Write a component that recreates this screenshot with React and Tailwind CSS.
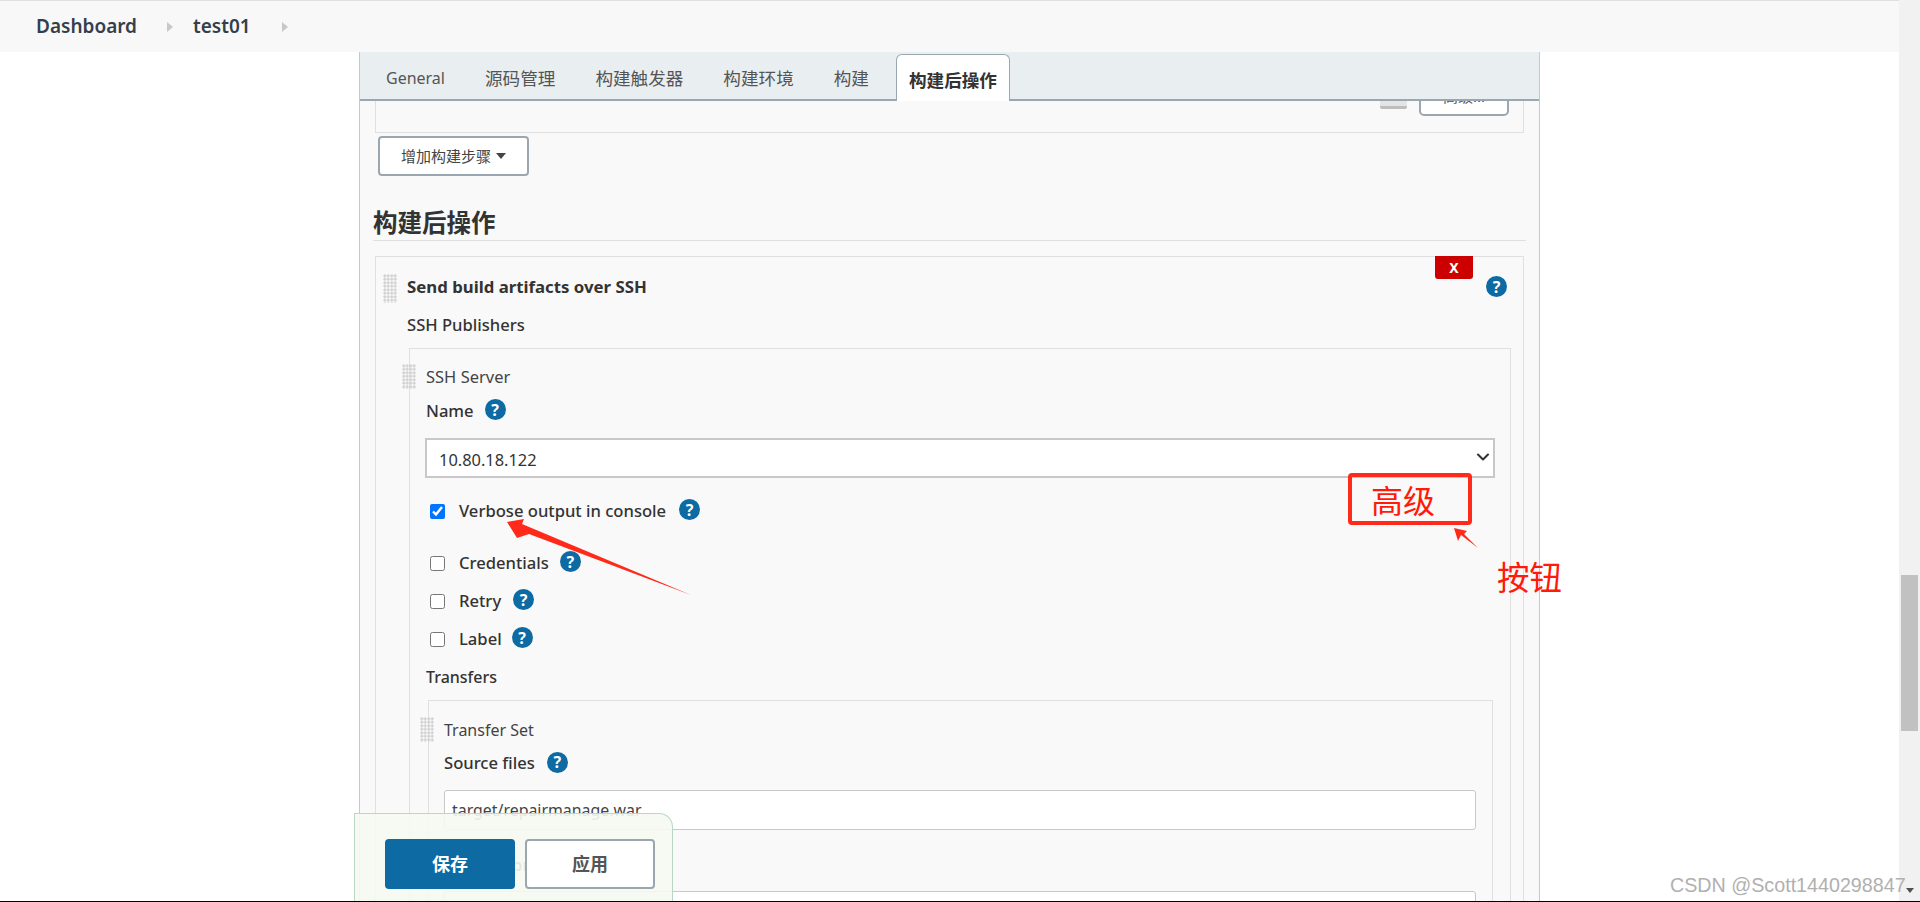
import { ChevronDown } from 'lucide-react';

const Help = ({ className = '' }) => (
  <span className={`flex h-[21px] w-[21px] shrink-0 items-center justify-center rounded-full bg-[#0d6aa3] text-[16px] font-bold leading-none text-white ${className}`}>?</span>
);

const Grip = ({ className = '' }) => (
  <span className={`block w-[14px] shrink-0 bg-[radial-gradient(#cfcfcf_1.2px,transparent_1.6px)] bg-[length:3.5px_3.5px] ${className}`} />
);

const CheckRow = ({ label, checked, className, gap }) => (
  <div className={`ml-[20px] flex h-[24px] items-center ${className}`}>
    <input type="checkbox" defaultChecked={checked} className="m-0 h-[15px] w-[15px] shrink-0" />
    <span className="ml-[14px] text-[16.6px] font-medium leading-[24px] text-[#333]">{label}</span>
    <Help className={`-mt-[3px] ${gap}`} />
  </div>
);

const tabs = ['General', '源码管理', '构建触发器', '构建环境', '构建'];

const Tabs = () => (
  <div className="flex h-[49px] items-end border-b-2 border-[#9aa7b0] bg-[#e9eef1] pl-[6px]">
    {tabs.map((t, i) => (
      <span key={t} className={`mx-[7px] flex h-[46px] items-center px-[13px] pt-[4px] text-[#555] ${i === 0 ? 'text-[16px]' : 'text-[17.6px]'}`}>{t}</span>
    ))}
    <span className="-mb-[2px] mx-[7px] flex h-[47px] items-center rounded-t-[6px] border border-b-0 border-[#9aa7b0] bg-white px-[12px] pt-[4px] text-[17.6px] font-bold text-[#333]">构建后操作</span>
  </div>
);

export default function App() {
  return (
    <div className="relative flex h-[902px] w-[1920px] overflow-hidden border-b border-black bg-white font-['Noto_Sans','Noto_Sans_CJK_SC',sans-serif] text-[#333]">
      <div className="w-[1899px] shrink-0">
        <header className="flex h-[52px] items-center border-t border-[#e0e0e0] bg-[#f8f8f8] pl-[36px] text-[19px] font-semibold text-[#333f4d]">
          <span>Dashboard</span>
          <span className="ml-[30px] h-0 w-0 border-y-[5px] border-l-[6px] border-y-transparent border-l-[#c8c8c8]" />
          <span className="ml-[20px]">test01</span>
          <span className="ml-[31px] h-0 w-0 border-y-[5px] border-l-[6px] border-y-transparent border-l-[#c8c8c8]" />
        </header>

        <main className="ml-[359px] h-[849px] w-[1181px] overflow-hidden border-x border-[#c8c8c8] bg-[#f9f9f9]">
          <Tabs />

          <div className="mx-[15px] flex h-[32px] items-start justify-end overflow-hidden border-x border-b border-[#e0e0e0] pr-[14px]">
            <div className="-mt-[22px] h-[30px] w-[27px] rounded-b-[2px] border-b-[3px] border-[#bdbdbd] bg-[#e4e4e4]" />
            <button className="ml-[12px] -mt-[25px] h-[40px] w-[90px] rounded-[5px] border-2 border-[#9aa7b0] bg-white text-[15px] text-[#555]">高级...</button>
          </div>

          <button className="ml-[18px] mt-[3px] flex h-[40px] w-[151px] items-center justify-center gap-[5px] rounded-[4px] border-2 border-[#9aa7b0] bg-white text-[15px] text-[#444]">
            增加构建步骤
            <span className="h-0 w-0 border-x-[5px] border-t-[6px] border-x-transparent border-t-[#444]" />
          </button>

          <h2 className="mx-[13px] mt-[30px] flex h-[35px] items-center border-b border-[#e0e0e0] text-[24.5px] font-bold text-[#333]">构建后操作</h2>

          <section className="relative mx-[15px] mt-[15px] border-x border-t border-[#e0e0e0]">
            <span className="absolute -top-px right-[50px] flex h-[23px] w-[38px] items-center justify-center rounded-b-[3px] bg-[#cc0000] text-[14px] font-bold text-white">X</span>

            <div className="mt-[17px] flex h-[29px] items-center pr-[16px] pl-[7px]">
              <Grip className="h-[29px]" />
              <span className="ml-[10px] -mt-[4px] text-[16.8px] font-bold">Send build artifacts over SSH</span>
              <Help className="ml-auto -mt-[4px]" />
            </div>

            <div className="ml-[31px] mt-[10px] h-[24px] text-[16.6px] font-medium leading-[24px]">SSH Publishers</div>

            <div className="ml-[33px] mr-[12px] mt-[11px] border-x border-t border-[#e0e0e0]">
              <div className="mt-[15px] flex h-[25px] items-center">
                <Grip className="-ml-[8px] h-[25px]" />
                <span className="ml-[10px] mt-px text-[16.5px] text-[#444]">SSH Server</span>
              </div>

              <div className="ml-[16px] mt-[10px] flex h-[24px] items-center">
                <span className="text-[16.6px] font-medium">Name</span>
                <Help className="ml-[11px] -mt-[3px]" />
              </div>

              <div className="relative ml-[15px] mt-[15px] h-[40px] w-[1070px]">
                <select className="block h-[40px] w-full appearance-none border-2 border-[#c8c8c8] bg-white pl-[12px] pt-[4px] text-[16.4px] text-[#333]">
                  <option>10.80.18.122</option>
                </select>
                <ChevronDown size={20} strokeWidth={2.5} className="pointer-events-none absolute right-[2px] top-[9px] text-[#333]" />
              </div>

              <CheckRow label="Verbose output in console" checked className="mt-[21px]" gap="ml-[13px]" />
              <CheckRow label="Credentials" className="mt-[28px]" gap="ml-[11px]" />
              <CheckRow label="Retry" className="mt-[14px]" gap="ml-[12px]" />
              <CheckRow label="Label" className="mt-[14px]" gap="ml-[10px]" />

              <div className="ml-[16px] mt-[14px] h-[24px] text-[16px] font-medium leading-[24px]">Transfers</div>

              <div className="ml-[18px] mr-[17px] mt-[11px] border-x border-t border-[#e0e0e0]">
                <div className="mt-[16px] flex h-[25px] items-center">
                  <Grip className="-ml-[9px] h-[25px]" />
                  <span className="ml-[10px] text-[16px] text-[#444]">Transfer Set</span>
                </div>
                <div className="ml-[15px] mt-[9px] flex h-[24px] items-center">
                  <span className="text-[16.6px] font-medium">Source files</span>
                  <Help className="ml-[12px] -mt-[2px]" />
                </div>
                <input readOnly defaultValue="target/repairmanage.war" className="ml-[15px] mt-[15px] block h-[40px] w-[1032px] rounded-[3px] border border-[#c8c8c8] bg-white px-[7px] text-[15.9px] text-[#444]" />
                <div className="ml-[15px] mt-[23px] h-[24px] text-[16.6px] font-medium leading-[24px]">Remove prefix</div>
                <input readOnly className="ml-[15px] mt-[14px] block h-[40px] w-[1032px] rounded-[3px] border border-[#c8c8c8] bg-white" />
              </div>
            </div>
          </section>
        </main>
      </div>

      <aside className="flex w-[21px] shrink-0 flex-col items-center bg-[#f1f1f1]">
        <div className="mt-[575px] h-[156px] w-[17px] bg-[#c1c1c1]" />
        <span className="mt-[157px] h-0 w-0 border-x-[4px] border-t-[5px] border-x-transparent border-t-[#505050]" />
      </aside>

      {/* sticky save bar */}
      <div className="absolute left-[354px] top-[813px] flex h-[88px] w-[319px] gap-[10px] rounded-tr-[14px] border-x border-t border-[#b9d8c4] bg-[#f5f9f2]/90 pl-[30px] pt-[25px]">
        <button className="h-[50px] w-[130px] rounded-[4px] bg-[#0d6aa3] text-[18px] font-bold text-white">保存</button>
        <button className="h-[50px] w-[130px] rounded-[4px] border-2 border-[#9aa7b0] bg-white text-[18px] font-bold text-[#555]">应用</button>
      </div>

      {/* red annotations drawn on the screenshot */}
      <div className="absolute left-[1348px] top-[473px] flex h-[52px] w-[124px] items-center justify-center rounded-[4px] border-4 border-[#ff2a1a] pr-[14px] pt-[3px] text-[32px] leading-none text-[#ff1a0a]">高级</div>
      <span className="absolute left-[1497px] top-[560px] text-[32.5px] leading-[36px] text-[#ff1a0a]">按钮</span>
      <svg className="pointer-events-none absolute left-0 top-0" width="1920" height="902">
        <polygon points="507,522 524,519 522,524 691,595 529,534 517,538" fill="#ff2a1a" />
        <polygon points="1454,528 1467,531 1464,534 1478,548 1461,535 1458,541" fill="#ff2a1a" />
      </svg>

      <span className="absolute left-[1670px] top-[873px] font-['Liberation_Sans',sans-serif] text-[19.7px] leading-[24px] text-[#b0b0b0]">CSDN @Scott1440298847</span>
    </div>
  );
}
